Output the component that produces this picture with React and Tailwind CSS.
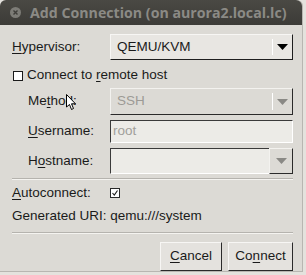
function Arrow({ disabled }) {
  return (
    <svg width="11" height="6" viewBox="0 0 11 6">
      <path d="M0 0 L11 0 L5.5 6 Z" fill={disabled ? '#8a8985' : '#000'} />
    </svg>
  )
}

function U({ children }) {
  return <span className="underline underline-offset-2 decoration-1">{children}</span>
}

export default function App() {
  return (
    <div className="w-[306px] h-[275px] bg-[#e4e2dd] overflow-hidden" style={{ fontFamily: '"Liberation Sans", Arial, sans-serif' }}>
      <div className="w-[303px] h-[272px] bg-[#dcdad5] rounded-t-[6px] border-r border-b border-[#b8b6b1] flex flex-col text-[13.5px] text-[#1a1a1a]">
        {/* title bar */}
        <div className="h-[25px] shrink-0 rounded-t-[6px] bg-gradient-to-b from-[#4a4944] to-[#3c3b37] flex items-center pl-[10px] gap-[9px]">
          <div className="w-[11px] h-[11px] rounded-full bg-[#7d7c77] flex items-center justify-center">
            <svg width="5" height="5" viewBox="0 0 5 5"><path d="M0.5 0.5 L4.5 4.5 M4.5 0.5 L0.5 4.5" stroke="#3f3e3a" strokeWidth="1.4" /></svg>
          </div>
          <span className="text-[#8b8a85] font-bold text-[14.2px]" style={{ fontFamily: '"Open Sans", "DejaVu Sans", sans-serif' }}>Add Connection (on aurora2.local.lc)</span>
        </div>

        <div className="flex flex-col pl-[12px] pr-[9px] pt-[9px]">
          {/* hypervisor */}
          <div className="flex items-center h-[26px]">
            <span className="w-[98px]"><U>H</U>ypervisor:</span>
            <div className="flex-1 h-[26px] flex bg-[#e8e6e2] border-t border-l border-[#f7f6f4] border-b border-r border-b-[#1e1e1e] border-r-[#1e1e1e]">
              <span className="flex-1 flex items-center pl-[6px]">QEMU/KVM</span>
              <div className="w-px my-[4px] bg-[#9a9893] border-r border-white" />
              <div className="w-[19px] flex items-center justify-center"><Arrow /></div>
            </div>
          </div>

          {/* remote */}
          <div className="flex items-center h-[15px] mt-[8px]">
            <div className="w-[10px] h-[10px] border border-[#1a1a1a] bg-white ml-[1px]" />
            <span className="ml-[4px]">Connect to <U>r</U>emote host</span>
          </div>

          <div className="flex flex-col pl-[16px] mt-[5px]">
            <div className="flex items-center h-[27px]">
              <span className="w-[82px] relative">Me<U>t</U>hod:
                <svg className="absolute left-[38px] top-[3px]" width="11" height="17" viewBox="0 0 11 17">
                  <path d="M0.5 0.5 L0.5 13 L3.5 10.5 L5.5 15.5 L7.5 14.5 L5.5 9.8 L9.5 9.8 Z" fill="#fff" stroke="#000" strokeWidth="1" strokeLinejoin="round" />
                </svg>
              </span>
              <div className="flex-1 h-[27px] flex bg-[#dcdad5] border-t border-l border-[#f3f2ef] border-b border-r border-b-[#2a2a2a] border-r-[#2a2a2a]">
                <span className="flex-1 flex items-center pl-[6px] text-[#9c9a96]">SSH</span>
                <div className="w-px my-[4px] bg-[#a4a29d] border-r border-white" />
                <div className="w-[19px] flex items-center justify-center"><Arrow disabled /></div>
              </div>
            </div>

            <div className="flex items-center h-[23px] mt-[5px]">
              <span className="w-[82px]"><U>U</U>sername:</span>
              <div className="flex-1 h-[23px] flex items-center bg-[#ecebe7] border-t border-l border-[#3a3a3a] border-b border-r border-b-white border-r-white pl-[2px] text-[#a19f9b]">
                root
              </div>
            </div>

            <div className="flex items-center h-[26px] mt-[5px]">
              <span className="w-[82px]">H<U>o</U>stname:</span>
              <div className="flex-1 h-[26px] flex">
                <div className="flex-1 bg-[#ecebe7] border-t border-l border-[#3a3a3a] border-b border-b-white" />
                <div className="w-[24px] flex items-center justify-center bg-[#dcdad5] border-t border-l border-[#f3f2ef] border-b border-r border-b-[#2a2a2a] border-r-[#2a2a2a]"><Arrow disabled /></div>
              </div>
            </div>
          </div>

          <div className="h-[2px] mt-[4px] border-t border-[#b5b3ae] border-b border-b-[#f4f3f0]" />

          <div className="flex items-center h-[20px] mt-[3px]">
            <span className="w-[98px]"><U>A</U>utoconnect:</span>
            <div className="w-[10px] h-[10px] border border-[#2a2a2a] bg-white flex items-center justify-center">
              <svg width="8" height="8" viewBox="0 0 8 8"><path d="M1.5 4 L3.3 6 L6.5 1.5" fill="none" stroke="#1a1a1a" strokeWidth="1.1" /></svg>
            </div>
          </div>

          <div className="h-[20px] mt-[3px] flex items-center">Generated URI: qemu:///system</div>

          <div className="h-[2px] mt-[6px] border-t border-[#b5b3ae] border-b border-b-[#f4f3f0]" />

          <div className="flex justify-end gap-[6px] mt-[8px]">
            <div className="w-[62px] h-[29px] flex items-center justify-center bg-[#e4e2de] border-t border-l border-[#f7f6f4] border-b border-r border-b-[#2a2a2a] border-r-[#2a2a2a]"><span><U>C</U>ancel</span></div>
            <div className="w-[65px] h-[29px] flex items-center justify-center bg-[#e4e2de] border-t border-l border-[#f7f6f4] border-b border-r border-b-[#2a2a2a] border-r-[#2a2a2a]"><span>Co<U>n</U>nect</span></div>
          </div>
        </div>
      </div>
    </div>
  )
}
